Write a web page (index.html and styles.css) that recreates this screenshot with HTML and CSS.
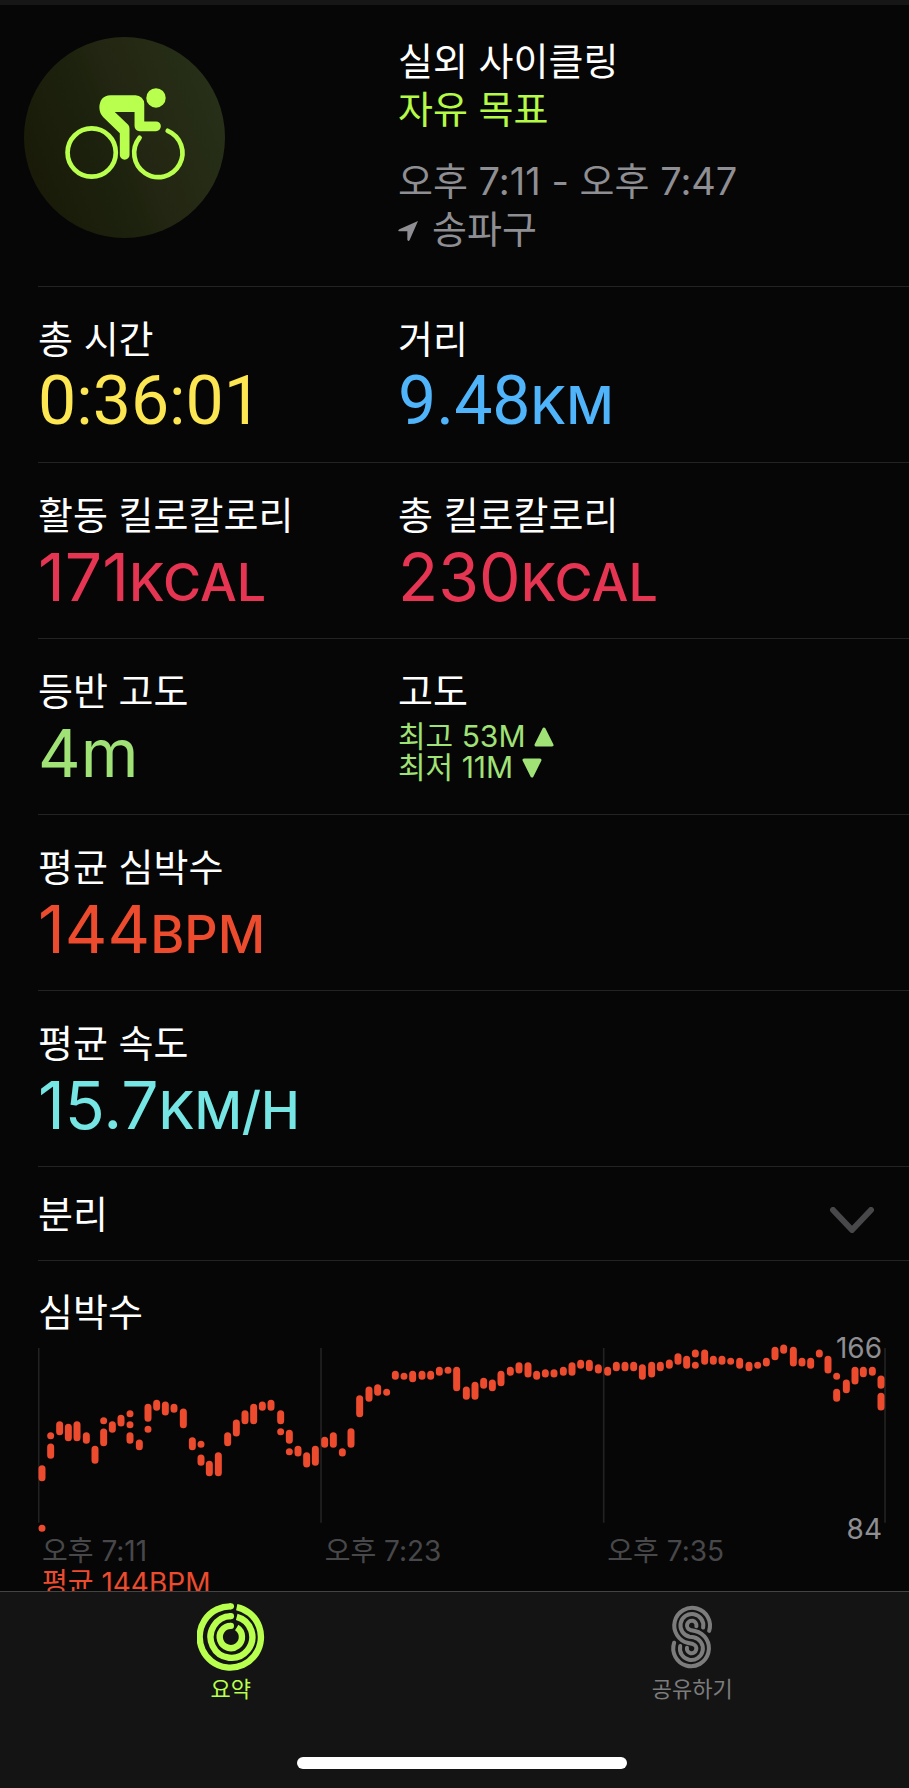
FILE: index.html
```html
<!DOCTYPE html>
<html lang="ko">
<head>
    <meta charset="UTF-8">
    <meta name="viewport" content="width=device-width, initial-scale=1.0">
    <title>실외 사이클링</title>
    <link rel="stylesheet" href="styles.css">
</head>
<body>
    <main class="workout">
        <header class="summary">
            <div class="summary-icon">
                <svg class="badge" viewBox="0 0 600 600" aria-hidden="true">
                    <defs>
                        <linearGradient id="badge-fill" x1="0" y1="0.7" x2="1" y2="0.3">
                            <stop offset="0" stop-color="#191a08"/>
                            <stop offset="0.4" stop-color="#1c220d"/>
                            <stop offset="0.55" stop-color="#232612"/>
                            <stop offset="1" stop-color="#273018"/>
                        </linearGradient>
                    </defs>
                    <circle cx="300" cy="300" r="300" fill="url(#badge-fill)"/>
                    <g fill="none" stroke="#b9ff4d" stroke-width="14" stroke-linecap="round">
                        <circle cx="202" cy="345" r="72"/>
                        <path d="M429 280 A72 72 0 1 1 345 301"/>
                    </g>
                    <g fill="#b9ff4d">
                        <circle cx="394" cy="182" r="29"/>
                        <path d="M258 174 H333 A26 26 0 0 1 359 200 V252 H394 A14 14 0 0 1 394 281 H345 A15 15 0 0 1 330 266 V224 H271 L311 262 Q315 266 315 274 V352 A14 14 0 0 1 286 352 V287 L236 239 Q225 227 225 210 Q226 176 258 174 Z"/>
                    </g>
                </svg>
            </div>
            <div class="summary-text">
                <h1>실외 사이클링</h1>
                <p class="goal">자유 목표</p>
                <p class="when">오후 7:11 - 오후 7:47</p>
                <p class="where">
                    <svg class="arrow" viewBox="0 0 60 60" aria-hidden="true"><path d="M60 0 L35 57 Q31 63 28 56 V31 H3 Q-2 29 4 25 Z"/></svg>
                    송파구
                </p>
            </div>
        </header>

        <dl class="metrics">
            <div class="row">
                <div class="metric">
                    <dt>총 시간</dt>
                    <dd class="value time">0:36:01</dd>
                </div>
                <div class="metric">
                    <dt>거리</dt>
                    <dd class="value distance">9.48<span class="unit">KM</span></dd>
                </div>
            </div>
            <div class="row">
                <div class="metric">
                    <dt>활동 킬로칼로리</dt>
                    <dd class="value energy">171<span class="unit">KCAL</span></dd>
                </div>
                <div class="metric">
                    <dt>총 킬로칼로리</dt>
                    <dd class="value energy">230<span class="unit">KCAL</span></dd>
                </div>
            </div>
            <div class="row">
                <div class="metric">
                    <dt>등반 고도</dt>
                    <dd class="value climb">4m</dd>
                </div>
                <div class="metric">
                    <dt>고도</dt>
                    <dd class="range">최고 53M <svg class="triangle" viewBox="0 0 20 20" aria-hidden="true"><path d="M10 2 L18 18 H2 Z"/></svg></dd>
                    <dd class="range">최저 11M <svg class="triangle" viewBox="0 0 20 20" aria-hidden="true"><path d="M2 2 H18 L10 18 Z"/></svg></dd>
                </div>
            </div>
            <div class="row">
                <div class="metric">
                    <dt>평균 심박수</dt>
                    <dd class="value heart">144<span class="unit">BPM</span></dd>
                </div>
            </div>
            <div class="row">
                <div class="metric">
                    <dt>평균 속도</dt>
                    <dd class="value speed">15.7<span class="unit">KM/H</span></dd>
                </div>
            </div>
        </dl>

        <button class="splits" type="button" aria-expanded="false">
            분리
            <svg class="chevron" viewBox="0 0 44 26" aria-hidden="true"><path d="M3 3 L22 23 L41 3"/></svg>
        </button>

        <section class="heart-rate">
            <h2>심박수</h2>
            <div class="chart">
                <svg class="plot" viewBox="0 0 2544 585" role="img" aria-label="심박수 그래프">
                    <g transform="translate(-114 -30)">
                        <path class="grid" d="M116 54 V578 M963 54 V578 M1811 54 V578 M2655 54 V578"/>
                        <path class="beats" d="
                            M126 416 V443 M126 595 h0 M152 351 V376 M152 317 h0 M179 284 V305 M205 292 V323 M231 284 V323
                            M259 317 V331 M285 358 V391 M311 306 V338 M311 272 h0 M337 284 V298 M363 265 V279
                            M390 317 V331 M390 251 h0 M390 284 h0 M418 339 V350 M444 232 V265 M444 298 h0
                            M470 220 V232 M496 225 V246 M522 232 V238 M550 246 V284 M577 332 V350 M603 384 V397 M603 343 h0
                            M628 403 V428 M655 377 V428 M683 317 V338 M709 279 V309 M735 251 V272 M761 232 V272
                            M787 225 V232 M813 220 V232 M842 251 V272 M842 305 h0 M868 310 V331 M868 365 h0
                            M894 358 V369 M920 377 V402 M946 358 V397 M974 331 V343 M1000 317 V343 M1027 365 V369
                            M1053 305 V343 M1079 206 V251 M1107 180 V205 M1133 173 V187 M1160 187 h0 M1186 133 V139
                            M1212 139 h0 M1238 133 V146 M1266 133 V139 M1292 133 V139 M1318 121 V127 M1344 121 h0
                            M1370 121 V173 M1399 180 V199 M1425 166 V199 M1451 154 V166 M1477 159 V173 M1503 133 V158
                            M1531 121 V127 M1557 107 V120 M1584 107 V132 M1610 133 V139 M1636 128 V132 M1662 128 V132
                            M1690 121 V127 M1716 107 V127 M1742 100 V106 M1768 100 V113 M1795 113 V120 M1823 121 V127
                            M1849 106 V113 M1875 106 V113 M1901 106 V113 M1927 113 V139 M1955 106 V132 M1981 106 V113
                            M2008 99 V106 M2034 80 V94 M2060 88 V106 M2086 69 V72 M2086 106 h0 M2114 69 V94 M2140 88 V94
                            M2166 88 V94 M2192 94 h0 M2219 94 V106 M2247 106 V113 M2273 106 h0 M2299 94 V99 M2325 61 V80
                            M2351 54 V61 M2380 61 V99 M2406 94 V99 M2432 94 V106 M2458 69 V72 M2484 88 V120
                            M2510 187 V205 M2510 139 h0 M2539 159 V179 M2565 121 V153 M2590 121 V131 M2617 121 V127
                            M2643 147 V166 M2643 199 V231"/>
                    </g>
                </svg>
                <span class="limit max">166</span>
                <span class="limit min">84</span>
            </div>
            <div class="axis">
                <span>오후 7:11</span>
                <span>오후 7:23</span>
                <span>오후 7:35</span>
            </div>
            <p class="average">평균 144BPM</p>
        </section>
    </main>

    <nav class="tabbar">
        <div class="tabbar-content">
            <div class="tabs">
                <a class="tab active" href="#summary">
                    <svg class="tab-icon" viewBox="0 0 202 202" aria-hidden="true">
                        <g fill="none" stroke="currentColor" stroke-width="19">
                            <path d="M118 12 A91 91 0 1 1 101 10"/>
                            <path d="M118 41 A62 62 0 1 1 101 39"/>
                            <path d="M118 73 A33 33 0 1 1 101 68"/>
                        </g>
                        <g fill="currentColor">
                            <circle cx="101" cy="10" r="9"/>
                            <circle cx="101" cy="39" r="9"/>
                            <circle cx="101" cy="68" r="9"/>
                        </g>
                    </svg>
                    <span>요약</span>
                </a>
                <a class="tab" href="#sharing">
                    <svg class="tab-icon" viewBox="-43 -10 202 202" aria-hidden="true">
                        <g fill="none" stroke="currentColor" stroke-width="12" stroke-linecap="round">
                            <path d="M109 73 A53 53 0 1 0 47 109 L61 112 A14 14 0 1 1 43 123"/>
                            <path d="M91 63 A34 34 0 1 0 51 90 L63 92 A34 34 0 1 1 23 118"/>
                            <path d="M71 59 A14 14 0 1 0 53 70 L67 73 A53 53 0 1 1 5 108"/>
                        </g>
                    </svg>
                    <span>공유하기</span>
                </a>
            </div>
            <div class="home-indicator"></div>
        </div>
    </nav>
</body>
</html>
```
FILE: styles.css
```css
* { box-sizing: border-box; }
body {
    font-family: Inter, 'Noto Sans CJK KR', sans-serif;
    font-size: 38px;
    line-height: 48px;
    margin: 0;
    height: 100vh;
    display: flex;
    flex-direction: column;
    background-color: #060606;
    color: #fff;
}
h1, h2, p, dl, dt, dd { margin: 0; font-size: inherit; font-weight: 400; }

.workout {
    flex: 1;
    min-height: 0;
    overflow-y: auto;
    scrollbar-width: none;
    border-top: 5px solid #161616;
    padding-left: 38px;
}

/* header */
.summary { display: flex; padding: 32px 0 33px; border-bottom: 1px solid #232323; }
.summary-icon { width: 360px; flex-shrink: 0; }
.badge { display: block; width: 201px; margin-left: -14px; }
.goal { color: #b4fa46; }
.when { margin-top: 24px; }
.when, .where { color: #8e8e93; }
.where { display: flex; align-items: center; gap: 14px; }
.arrow { width: 20px; height: 20px; margin-top: 4px; fill: #8e8e93; }

/* metrics */
.row { display: flex; height: 176px; padding-top: 28px; border-bottom: 1px solid #232323; }
.metric { width: 360px; }
.metric + .metric { flex: 1; }
.value { font-size: 66px; line-height: 76px; }
.time, .distance { font-family: Roboto, sans-serif; font-size: 68px; }
.unit { font-family: Inter, sans-serif; font-size: 52px; font-weight: 500; line-height: 1; }
.time { color: #fce652; }
.distance { color: #50b4fa; }
.energy { color: #e63453; }
.climb { color: #a0e276; }
.heart { color: #ec4b2e; }
.speed { color: #76e6e4; }
.range { font-size: 30px; line-height: 31px; color: #a0e276; }
dt + .range { margin-top: 6px; }
.triangle { width: 20px; height: 20px; fill: #a0e276; stroke: #a0e276; stroke-width: 3; stroke-linejoin: round; }

/* splits */
.splits {
    display: flex;
    align-items: center;
    justify-content: space-between;
    width: 100%;
    height: 94px;
    padding: 0 35px 0 0;
    border: 0;
    border-bottom: 1px solid #232323;
    background: none;
    color: inherit;
    font: inherit;
}
.chevron { width: 44px; margin-top: 12px; fill: none; stroke: #48484a; stroke-width: 6; stroke-linecap: round; stroke-linejoin: round; }

/* heart rate chart */
.heart-rate { padding: 27px 23px 0 0; }
.chart { position: relative; margin-top: 4px; }
.plot { display: block; width: 100%; }
.grid { stroke: #222; stroke-width: 5; }
.beats { fill: none; stroke: #ec4b2e; stroke-width: 21; stroke-linecap: round; }
.limit { position: absolute; right: 4px; font-size: 28px; line-height: 32px; color: #8e8e93; }
.max { top: -8px; }
.min { bottom: -10px; }
.axis { display: grid; grid-template-columns: repeat(3, 1fr); color: #48484a; }
.axis, .average { font-size: 28px; line-height: 32px; }
.axis span, .average { padding-left: 4px; }
.average { color: #ec4b2e; }

/* tab bar */
.tabbar { height: 197px; flex-shrink: 0; overflow: hidden; border-top: 1px solid #444; background-color: #141414; }
/* the bar runs slightly past the right edge of the window */
.tabbar-content { margin-right: -14px; }
.tabs { display: grid; grid-template-columns: 1fr 1fr; }
.tab {
    display: flex;
    flex-direction: column;
    align-items: center;
    gap: 2px;
    padding-top: 11px;
    font-size: 22px;
    line-height: 32px;
    color: #7c7c7c;
    text-decoration: none;
}
.tab.active { color: #b9ff4d; }
.tab-icon { width: 68px; height: 68px; }
.home-indicator { width: 330px; height: 12px; margin: 52px auto 0; border-radius: 6px; background-color: #fff; }
```
